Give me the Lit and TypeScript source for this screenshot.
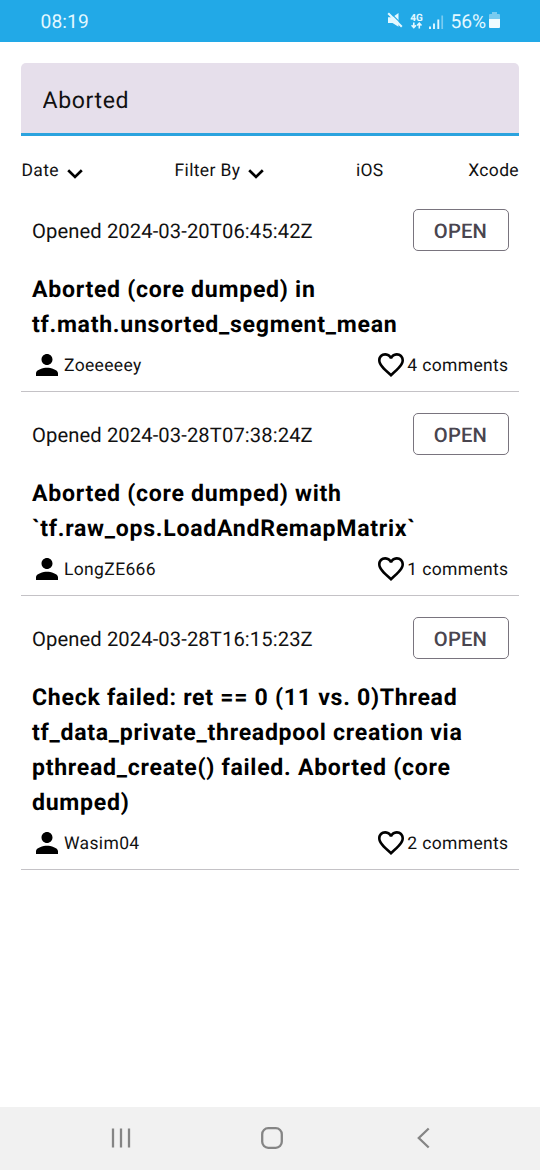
import { LitElement, html, css, svg } from "lit";
import { customElement, property } from "lit/decorators.js";

interface Issue {
  opened: string;
  title: string;
  author: string;
  comments: number;
}

const issues: Issue[] = [
  {
    opened: "2024-03-20T06:45:42Z",
    title: "Aborted (core dumped) in tf.math.unsorted_segment_mean",
    author: "Zoeeeeey",
    comments: 4,
  },
  {
    opened: "2024-03-28T07:38:24Z",
    title: "Aborted (core dumped) with `tf.raw_ops.LoadAndRemapMatrix`",
    author: "LongZE666",
    comments: 1,
  },
  {
    opened: "2024-03-28T16:15:23Z",
    title:
      "Check failed: ret == 0 (11 vs. 0)Thread tf_data_private_threadpool creation via pthread_create() failed. Aborted (core dumped)",
    author: "Wasim04",
    comments: 2,
  },
];

const chevron = html`<svg class="chevron" width="16" height="10" viewBox="0 0 16 10">
  <path d="M1.2 1.2 8 7.9l6.8-6.7" fill="none" stroke="#000" stroke-width="2.7" />
</svg>`;

@customElement("status-bar")
export class StatusBar extends LitElement {
  static styles = css`
    :host {
      display: flex;
      align-items: center;
      justify-content: space-between;
      box-sizing: border-box;
      height: 41.5px;
      padding: 2px 40px 0 40.5px;
      background: #22a9e7;
      color: #e4f8ff;
      font-size: 19.2px;
    }
    .clock {
      letter-spacing: 0.1px;
    }
    .icons {
      display: flex;
      align-items: center;
    }
    .battery-text {
      margin-left: 6.5px;
    }
    .mute { margin-top: -4px; }
    .net { margin: -1px 0 0 7px; }
    .signal { margin: 1px 0 0 6px; }
    .battery { margin: -3px 0 0 3px; }
    svg {
      display: block;
    }
  `;
  render() {
    return html`
      <span class="clock">08:19</span>
      <div class="icons">
        <svg class="mute" width="16" height="16" viewBox="0 0 16 16">
          <path d="M1 5.200h4.500L11.500 1v13.800L5.500 11H1z" fill="#e4f8ff" />
          <path d="M3.400 .8 15.500 12.900" stroke="#22a9e7" stroke-width="1.200" />
          <path d="M1.200 1.200 14.800 14.800" stroke="#e4f8ff" stroke-width="2" />
        </svg>
        <svg class="net" width="13" height="18" viewBox="0 0 13 18">
          <text x="6.500" y="8.500" font-family="Roboto, sans-serif" font-size="10" font-weight="700" text-anchor="middle" fill="#e4f8ff">4G</text>
          <path d="M3.800 10.500v5M1.600 13.300l2.200 2.300L6 13.300M9.300 16.500v-5M7.100 13.500l2.200-2.300 2.200 2.300" fill="none" stroke="#e4f8ff" stroke-width="1.600" />
        </svg>
        <svg class="signal" width="15" height="15" viewBox="0 0 15 15">
          <path d="M1 11.500v2.500M5 8.500v5.500M9.300 4.500v9.500" stroke="#e4f8ff" stroke-width="1.900" />
          <path d="M13.200 .5v13.500" stroke="#79cbf0" stroke-width="1.700" />
        </svg>
        <span class="battery-text">56%</span>
        <svg class="battery" width="11" height="16" viewBox="0 0 11 16">
          <path d="M3 0h5v2h2q1 0 1 1v4H0V3q0-1 1-1h2z" fill="#79cbf0" />
          <path d="M0 7h11v8q0 1-1 1H1q-1 0-1-1z" fill="#effbff" />
        </svg>
      </div>
    `;
  }
}

@customElement("filter-row")
export class FilterRow extends LitElement {
  static styles = css`
    :host {
      display: flex;
      justify-content: space-between;
      align-items: center;
      height: 28px;
      padding: 20px 0 4px 0.5px;
      font-size: 17.500px;
      letter-spacing: 0.350px;
      color: #111;
    }
    .item {
      display: flex;
      align-items: center;
      white-space: nowrap;
    }
    .label {
      padding-top: 1px;
    }
    .chevron {
      margin: 7px 7px 0 8px;
    }
  `;
  render() {
    return html`
      <div class="item"><span class="label">Date</span>${chevron}</div>
      <div class="item"><span class="label">Filter By</span>${chevron}</div>
      <div class="item"><span class="label">iOS</span></div>
      <div class="item"><span class="label">Xcode</span></div>
    `;
  }
}

@customElement("issue-card")
export class IssueCard extends LitElement {
  @property({ attribute: false }) issue!: Issue;

  static styles = css`
    :host {
      display: block;
      padding: 21px 10.500px 11px 11px;
      border-bottom: 1px solid #c4c2c6;
      color: #000;
    }
    .top {
      display: flex;
      align-items: center;
      justify-content: space-between;
      height: 42px;
    }
    .opened {
      padding-top: 2px;
      font-size: 20.200px;
      letter-spacing: 0.100px;
      color: #111;
    }
    .state {
      box-sizing: border-box;
      width: 96px;
      height: 42px;
      padding: 2px 0 0;
      border: 1.400px solid #79747e;
      border-radius: 5px;
      background: none;
      font: 500 20.200px Roboto, sans-serif;
      letter-spacing: 0.200px;
      color: #49454f;
      text-rendering: inherit;
    }
    .title {
      margin: 21px 0 0;
      font-size: 23.100px;
      line-height: 35px;
      font-weight: 700;
      letter-spacing: 0.710px;
    }
    .meta {
      display: flex;
      justify-content: space-between;
      margin-top: 7px;
      height: 31px;
    }
    .part {
      display: flex;
      align-items: center;
      font-size: 17.500px;
      letter-spacing: 0.350px;
      color: #111;
    }
    .part span {
      padding-top: 2px;
    }
    .person {
      margin: 0 6px 0 4px;
    }
    .heart {
      margin-right: 3px;
    }
  `;
  render() {
    const { opened, title, author, comments } = this.issue;
    return html`
      <div class="top">
        <span class="opened">Opened ${opened}</span>
        <button class="state">OPEN</button>
      </div>
      <h2 class="title">${title}</h2>
      <div class="meta">
        <div class="part">
          <svg class="person" width="22" height="22" viewBox="4 4 16 16">
            <path d="M12 12c2.210 0 4-1.790 4-4s-1.790-4-4-4-4 1.790-4 4 1.790 4 4 4zm0 2c-2.670 0-8 1.340-8 4v2h16v-2c0-2.660-5.330-4-8-4z" />
          </svg>
          <span>${author}</span>
        </div>
        <div class="part">
          <svg class="heart" width="26" height="24" viewBox="2 3 20 18.350">
            <path d="M16.500 3c-1.740 0-3.410.81-4.500 2.090C10.910 3.810 9.240 3 7.500 3 4.420 3 2 5.420 2 8.500c0 3.780 3.400 6.860 8.550 11.540L12 21.350l1.450-1.320C18.600 15.360 22 12.280 22 8.500 22 5.420 19.580 3 16.500 3zm-4.400 15.550-.1.100-.1-.1C7.140 14.240 4 11.390 4 8.500 4 6.500 5.500 5 7.500 5c1.540 0 3.040.99 3.570 2.360h1.870C13.460 5.990 14.960 5 16.500 5c2 0 3.500 1.500 3.500 3.500 0 2.890-3.140 5.740-7.900 10.050z" />
          </svg>
          <span>${comments} comments</span>
        </div>
      </div>
    `;
  }
}

@customElement("nav-bar")
export class NavBar extends LitElement {
  static styles = css`
    :host {
      display: flex;
      justify-content: space-between;
      align-items: center;
      box-sizing: border-box;
      height: 63px;
      padding: 0 106px 1px 110px;
      background: #f1f1f1;
    }
  `;
  render() {
    const line = "#858585";
    return html`
      <svg width="22" height="22" viewBox="0 0 22 22">
        ${[3, 11, 19].map((x) => svg`<path d="M${x} 1.500v19" stroke=${line} stroke-width="2.300" />`)}
      </svg>
      <svg width="22" height="22" viewBox="0 0 22 22">
        <rect x="1.200" y="1.200" width="19.600" height="19.600" rx="6" fill="none" stroke=${line} stroke-width="2.300" />
      </svg>
      <svg width="22" height="22" viewBox="0 0 22 22">
        <path d="M16.700 1.500 6.800 11l9.900 9.500" fill="none" stroke=${line} stroke-width="2.300" />
      </svg>
    `;
  }
}

@customElement("app-root")
export class AppRoot extends LitElement {
  static styles = css`
    :host {
      display: flex;
      flex-direction: column;
      height: 1170px;
      background: #fff;
      font-family: Roboto, sans-serif;
      text-rendering: geometricPrecision;
      overflow: hidden;
    }
    .page {
      flex: 1;
      padding: 21.500px 21px 0;
    }
    .search {
      display: block;
      box-sizing: border-box;
      width: 100%;
      height: 73px;
      padding: 5px 21.5px 0;
      border: 0;
      border-bottom: 3px solid #2ba3de;
      border-radius: 5px 5px 0 0;
      background: #e6dfeb;
      font: 400 23.100px Roboto, sans-serif;
      letter-spacing: 0.600px;
      color: #111;
      outline: none;
      text-rendering: inherit;
    }
  `;
  render() {
    return html`
      <status-bar></status-bar>
      <main class="page">
        <input class="search" .value=${"Aborted"} aria-label="Search" />
        <filter-row></filter-row>
        ${issues.map((issue) => html`<issue-card .issue=${issue}></issue-card>`)}
      </main>
      <nav-bar></nav-bar>
    `;
  }
}
